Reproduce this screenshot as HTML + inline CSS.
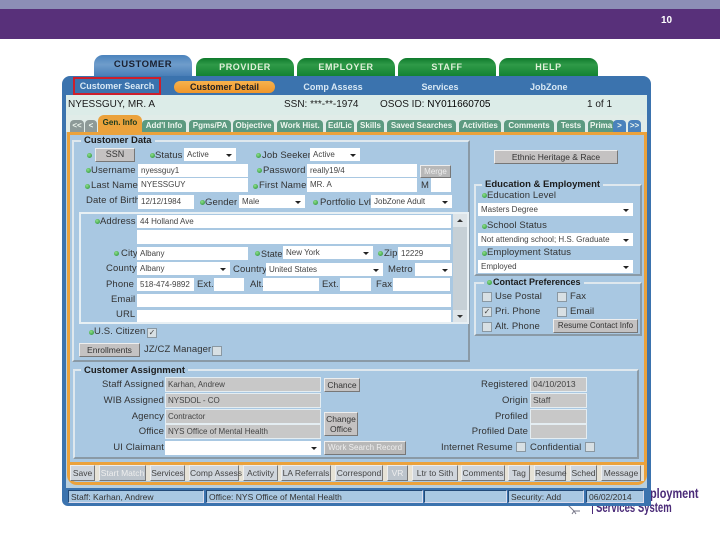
<!DOCTYPE html>
<html><head><meta charset="utf-8"><style>
html,body{margin:0;padding:0}
body{width:720px;height:540px;overflow:hidden;background:#fff;position:relative;font-family:"Liberation Sans",sans-serif;font-size:10px;color:#222;filter:blur(.35px)}
div,span{position:absolute;white-space:nowrap;box-sizing:border-box}
.tp{top:58px;height:19px;background:linear-gradient(#0f7a2c,#2f9a48 35%,#118030);border-radius:9px 9px 0 0;color:#dff0d8;font:bold 9px/19px "Liberation Sans",sans-serif;letter-spacing:.6px;text-align:center}
.n{top:81px;color:#d8e8f4;font:bold 9px/12px "Liberation Sans",sans-serif;text-align:center}
.i{top:99px;font-size:10px;line-height:12px;color:#1a1a1a}
.t{top:120px;height:12px;background:#5c9a80;color:#eef6ee;border-radius:4px 4px 0 0;font:bold 8px/12px "Liberation Sans",sans-serif;text-align:center;overflow:hidden}
.g{border:2px solid #dfe8ee;border-right-color:#8a9aa6;border-bottom-color:#8a9aa6}
.gt{background:#a9c8e2;padding:0 3px;color:#1c1c1c;font-size:9.5px;line-height:10px;font-weight:bold}
.l{font-size:9.5px;line-height:12px;color:#333;letter-spacing:.1px}
.r{text-align:right;width:110px}
.d{width:5px;height:5px;border-radius:50%;background:radial-gradient(circle at 40% 35%,#8fe08a,#1f8a32)}
.w{background:#fff;font-size:8px;line-height:13px;padding-left:3px;color:#444;overflow:hidden}
.s:after{content:"";position:absolute;right:4px;top:6px;border:3px solid transparent;border-top:3px solid #222;border-bottom:0}
.a{background:#c8c8c8;border:1px solid #e4edf2;font-size:8px;line-height:11px;padding-left:2px;color:#444}
.b{background:#c4c2c2;border:1px solid;border-color:#eee #777 #777 #eee;font-size:8px;line-height:11px;color:#333;text-align:center}
.f{color:#eee;background:#b8b8b8}
.c{width:10px;height:10px;background:#d8e0e4;border:1px solid #8a98a2;font-size:8px;line-height:8px;color:#444;text-align:center}
.o{top:465px;height:16px;background:#cfd5dc;border:1px solid;border-color:#eee #777 #777 #eee;font-size:8.5px;line-height:14px;color:#444;text-align:center}
.st{top:490px;height:13px;background:#a9c8e2;border:1px solid;border-color:#234a78 #dde #dde #234a78;font-size:8.5px;line-height:12px;padding-left:2px;color:#333}
</style></head><body>
<div style="left:0;top:0;width:720px;height:9px;background:#8c8eb6"></div>
<div style="left:0;top:9px;width:720px;height:30px;background:#58307a"></div>
<div style="left:661px;top:15px;color:#fff;font:bold 10px/12px 'Liberation Sans',sans-serif">10</div>

<div style="left:650px;top:486px;color:#4a2a78;font:bold 14px/14px 'Liberation Sans',sans-serif;transform:scaleX(.78);transform-origin:0 0">ployment</div>
<div style="left:596px;top:500px;color:#4a2a78;font:bold 14px/14px 'Liberation Sans',sans-serif;transform:scaleX(.68);transform-origin:0 0">Services System</div>
<div style="left:592px;top:504px;width:1px;height:10px;background:#4a2a78"></div>
<svg style="position:absolute;left:566px;top:504px" width="16" height="12"><path d="M2 1 L8 7 L14 7 M8 7 L10 10 M8 7 L6 10" stroke="#778" fill="none" stroke-width="1"/></svg>

<div style="left:94px;top:55px;width:98px;height:24px;background:linear-gradient(#4b83bd,#6f9dcb 40%,#3f76b2);border-radius:9px 9px 0 0;color:#1a2030;font:bold 9.5px/19px 'Liberation Sans',sans-serif;letter-spacing:.5px;text-align:center">CUSTOMER</div>
<div class="tp" style="left:196px;width:98px">PROVIDER</div>
<div class="tp" style="left:297px;width:98px">EMPLOYER</div>
<div class="tp" style="left:398px;width:98px">STAFF</div>
<div class="tp" style="left:499px;width:99px">HELP</div>

<div style="left:62px;top:76px;width:589px;height:430px;background:#3b73ae;border-radius:8px 8px 0 6px"></div>
<div style="left:66px;top:95px;width:581px;height:20px;background:#dcece8"></div>
<div style="left:66px;top:115px;width:581px;height:18px;background:#e0ece8"></div>
<div style="left:66px;top:132px;width:581px;height:356px;background:#b8cfde"></div>

<div style="left:73px;top:77px;width:88px;height:18px;border:2px solid #cc1f2c;background:#3b73ae"></div>
<div class="n" style="left:73px;width:88px;top:80px">Customer Search</div>
<div class="n" style="left:174px;width:101px;height:12px;background:linear-gradient(#f6b24e,#f0962a);border-radius:6px;color:#222">Customer Detail</div>
<div class="n" style="left:303px;width:60px">Comp Assess</div>
<div class="n" style="left:421px;width:38px">Services</div>
<div class="n" style="left:530px;width:37px">JobZone</div>

<div class="i" style="left:68px">NYESSGUY, MR. A</div>
<div class="i" style="left:284px">SSN: ***-**-1974</div>
<div class="i" style="left:380px">OSOS ID: <b style="font-weight:normal;color:#000">NY011660705</b></div>
<div class="i" style="left:587px">1 of 1</div>

<div class="t" style="left:70px;width:14px;background:#8d9a98">&lt;&lt;</div>
<div class="t" style="left:85px;width:12px;background:#8d9a98">&lt;</div>
<div class="t" style="left:142px;width:44px">Add'l Info</div>
<div class="t" style="left:189px;width:42px">Pgms/PA</div>
<div class="t" style="left:233px;width:41px">Objective</div>
<div class="t" style="left:277px;width:46px">Work Hist.</div>
<div class="t" style="left:326px;width:28px">Ed/Lic</div>
<div class="t" style="left:357px;width:27px">Skills</div>
<div class="t" style="left:387px;width:69px">Saved Searches</div>
<div class="t" style="left:459px;width:42px">Activities</div>
<div class="t" style="left:504px;width:50px">Comments</div>
<div class="t" style="left:557px;width:28px">Tests</div>
<div class="t" style="left:588px;width:26px;text-align:left;padding-left:2px">Prima</div>
<div class="t" style="left:613px;width:13px;background:#4a82bc">&gt;</div>
<div class="t" style="left:628px;width:13px;background:#4a82bc">&gt;&gt;</div>

<div style="left:67px;top:132px;width:580px;height:353px;border:3px solid #eba23c;background:#a9c8e2;border-radius:0 0 10px 10px"></div>
<div style="left:70px;top:462px;width:574px;height:3px;background:#eba23c"></div>
<div style="left:70px;top:465px;width:574px;height:16px;background:#e6e2d6"></div>
<div style="left:98px;top:115px;width:44px;height:19px;background:#eba23c;border-radius:6px 6px 0 0;color:#1a3a20;font:bold 8px/16px 'Liberation Sans',sans-serif;text-align:center">Gen. Info</div>

<div class="g" style="left:72px;top:140px;width:398px;height:222px"></div>
<div class="gt" style="left:81px;top:136px">Customer Data</div>

<div class="d" style="left:87px;top:153px"></div>
<div class="b" style="left:95px;top:148px;width:40px;height:14px;font-size:9px">SSN</div>
<div class="d" style="left:150px;top:153px"></div><div class="l" style="left:155px;top:150px">Status</div>
<div class="w s" style="left:184px;top:148px;width:52px;height:13px">Active</div>
<div class="d" style="left:256px;top:153px"></div><div class="l" style="left:262px;top:150px">Job Seeker</div>
<div class="w s" style="left:310px;top:148px;width:50px;height:13px">Active</div>

<div class="d" style="left:86px;top:168px"></div><div class="l" style="left:91px;top:165px">Username</div>
<div class="w" style="left:138px;top:164px;width:110px;height:13px">nyessguy1</div>
<div class="d" style="left:257px;top:168px"></div><div class="l" style="left:263px;top:165px">Password</div>
<div class="w" style="left:307px;top:164px;width:110px;height:13px">really19/4</div>
<div class="b f" style="left:420px;top:165px;width:31px;height:13px">Merge</div>

<div class="d" style="left:85px;top:184px"></div><div class="l" style="left:91px;top:180px">Last Name</div>
<div class="w" style="left:138px;top:178px;width:110px;height:14px">NYESSGUY</div>
<div class="d" style="left:253px;top:184px"></div><div class="l" style="left:259px;top:180px">First Name</div>
<div class="w" style="left:307px;top:178px;width:110px;height:14px">MR. A</div>
<div class="l" style="left:421px;top:180px">M</div>
<div class="w" style="left:431px;top:178px;width:20px;height:14px"></div>

<div class="l" style="left:86px;top:195px">Date of Birth</div>
<div class="w" style="left:138px;top:195px;width:56px;height:14px">12/12/1984</div>
<div class="d" style="left:200px;top:200px"></div><div class="l" style="left:205px;top:197px">Gender</div>
<div class="w s" style="left:239px;top:195px;width:66px;height:13px">Male</div>
<div class="d" style="left:313px;top:200px"></div><div class="l" style="left:320px;top:197px">Portfolio Lvl</div>
<div class="w s" style="left:371px;top:195px;width:81px;height:13px">JobZone Adult</div>

<div style="left:79px;top:212px;width:390px;height:112px;border:2px solid #e8f0f4"></div>
<div style="left:453px;top:214px;width:14px;height:108px;background:#c6d0d6"></div>
<div style="left:453px;top:214px;width:14px;height:13px;background:#dde4e8"></div>
<div style="left:453px;top:310px;width:14px;height:12px;background:#dde4e8"></div>
<div style="left:457px;top:219px;border:3px solid transparent;border-bottom:3px solid #333;border-top:0"></div>
<div style="left:457px;top:315px;border:3px solid transparent;border-top:3px solid #333;border-bottom:0"></div>

<div class="d" style="left:95px;top:219px"></div><div class="l" style="left:100px;top:216px">Address</div>
<div class="w" style="left:137px;top:215px;width:314px;height:13px">44 Holland Ave</div>
<div class="w" style="left:137px;top:230px;width:314px;height:14px"></div>
<div class="d" style="left:114px;top:251px"></div><div class="l" style="left:121px;top:248px">City</div>
<div class="w" style="left:137px;top:247px;width:111px;height:13px">Albany</div>
<div class="d" style="left:255px;top:251px"></div><div class="l" style="left:261px;top:248px;font-size:9px">State</div>
<div class="w s" style="left:283px;top:246px;width:90px;height:13px">New York</div>
<div class="d" style="left:378px;top:251px"></div><div class="l" style="left:384px;top:248px">Zip</div>
<div class="w" style="left:398px;top:247px;width:52px;height:13px">12229</div>

<div class="l" style="left:106px;top:263px">County</div>
<div class="w s" style="left:137px;top:262px;width:93px;height:13px">Albany</div>
<div class="l" style="left:233px;top:264px">Country</div>
<div class="w s" style="left:266px;top:263px;width:117px;height:13px">United States</div>
<div class="l" style="left:388px;top:264px">Metro</div>
<div class="w s" style="left:415px;top:263px;width:37px;height:13px"></div>

<div class="l" style="left:106px;top:279px">Phone</div>
<div class="w" style="left:137px;top:278px;width:57px;height:13px">518-474-9892</div>
<div class="l" style="left:197px;top:279px">Ext.</div>
<div class="w" style="left:214px;top:278px;width:30px;height:13px"></div>
<div class="l" style="left:250px;top:279px">Alt.</div>
<div class="w" style="left:263px;top:278px;width:56px;height:13px"></div>
<div class="l" style="left:322px;top:279px">Ext.</div>
<div class="w" style="left:340px;top:278px;width:31px;height:13px"></div>
<div class="l" style="left:376px;top:279px">Fax</div>
<div class="w" style="left:393px;top:278px;width:57px;height:13px"></div>

<div class="l" style="left:111px;top:294px">Email</div>
<div class="w" style="left:137px;top:294px;width:314px;height:13px"></div>
<div class="l" style="left:116px;top:309px">URL</div>
<div class="w" style="left:137px;top:310px;width:314px;height:12px"></div>

<div class="d" style="left:89px;top:330px"></div><div class="l" style="left:94px;top:326px">U.S. Citizen</div>
<div class="c" style="left:147px;top:328px">&#10003;</div>
<div class="b" style="left:79px;top:343px;width:61px;height:14px;line-height:12px;font-size:8.5px">Enrollments</div>
<div class="l" style="left:144px;top:344px">JZ/CZ Manager</div>
<div class="c" style="left:212px;top:346px"></div>

<div class="b" style="left:494px;top:150px;width:124px;height:14px;line-height:12px;font-size:8.5px">Ethnic Heritage &amp; Race</div>

<div class="g" style="left:474px;top:184px;width:168px;height:92px"></div>
<div class="gt" style="left:482px;top:180px">Education &amp; Employment</div>
<div class="d" style="left:482px;top:193px"></div><div class="l" style="left:487px;top:190px">Education Level</div>
<div class="w s" style="left:478px;top:203px;width:155px;height:13px">Masters Degree</div>
<div class="d" style="left:482px;top:224px"></div><div class="l" style="left:487px;top:220px">School Status</div>
<div class="w s" style="left:478px;top:233px;width:155px;height:13px">Not attending school; H.S. Graduate</div>
<div class="d" style="left:482px;top:251px"></div><div class="l" style="left:487px;top:247px">Employment Status</div>
<div class="w s" style="left:478px;top:260px;width:155px;height:13px">Employed</div>

<div class="g" style="left:474px;top:282px;width:168px;height:54px"></div>
<div class="gt" style="left:484px;top:277px;padding-left:9px;font-size:9px">Contact Preferences</div>
<div class="d" style="left:487px;top:280px"></div>
<div class="c" style="left:482px;top:292px"></div><div class="l" style="left:495px;top:291px">Use Postal</div>
<div class="c" style="left:557px;top:292px"></div><div class="l" style="left:570px;top:291px">Fax</div>
<div class="c" style="left:482px;top:307px">&#10003;</div><div class="l" style="left:495px;top:306px">Pri. Phone</div>
<div class="c" style="left:557px;top:307px"></div><div class="l" style="left:570px;top:306px">Email</div>
<div class="c" style="left:482px;top:322px"></div><div class="l" style="left:495px;top:321px">Alt. Phone</div>
<div class="b" style="left:553px;top:319px;width:85px;height:14px;line-height:12px;font-size:8px">Resume Contact Info</div>

<div class="g" style="left:73px;top:369px;width:566px;height:90px"></div>
<div class="gt" style="left:81px;top:366px">Customer Assignment</div>
<div class="l r" style="left:54px;top:379px">Staff Assigned</div>
<div class="l r" style="left:54px;top:395px">WIB Assigned</div>
<div class="l r" style="left:54px;top:411px">Agency</div>
<div class="l r" style="left:54px;top:426px">Office</div>
<div class="l r" style="left:54px;top:442px">UI Claimant</div>
<div class="a" style="left:165px;top:377px;width:156px;height:15px;line-height:13px">Karhan, Andrew</div>
<div class="a" style="left:165px;top:393px;width:156px;height:15px;line-height:13px">NYSDOL - CO</div>
<div class="a" style="left:165px;top:409px;width:156px;height:15px;line-height:13px">Contractor</div>
<div class="a" style="left:165px;top:424px;width:156px;height:15px;line-height:13px">NYS Office of Mental Health</div>
<div class="w s" style="left:165px;top:441px;width:156px;height:14px"></div>
<div class="b" style="left:324px;top:378px;width:36px;height:14px;line-height:12px;font-size:8.5px">Chance</div>
<div class="b" style="left:324px;top:412px;width:34px;height:24px;white-space:normal;line-height:10px;padding-top:1px;font-size:8.5px">Change Office</div>
<div class="b f" style="left:324px;top:441px;width:82px;height:14px;line-height:12px">Work Search Record</div>

<div class="l r" style="left:418px;top:379px">Registered</div>
<div class="l r" style="left:418px;top:395px">Origin</div>
<div class="l r" style="left:418px;top:411px">Profiled</div>
<div class="l r" style="left:418px;top:426px">Profiled Date</div>
<div class="a" style="left:530px;top:377px;width:57px;height:15px;line-height:13px;font-size:8.5px">04/10/2013</div>
<div class="a" style="left:530px;top:393px;width:57px;height:15px;line-height:13px;font-size:8.5px">Staff</div>
<div class="a" style="left:530px;top:409px;width:57px;height:15px"></div>
<div class="a" style="left:530px;top:424px;width:57px;height:15px"></div>
<div class="l" style="left:441px;top:442px">Internet Resume</div>
<div class="c" style="left:516px;top:442px"></div>
<div class="l" style="left:530px;top:442px">Confidential</div>
<div class="c" style="left:585px;top:442px"></div>

<div class="o" style="left:70px;width:25px">Save</div>
<div class="o" style="left:99px;width:47px;color:#eee;background:#bcc4cc">Start Match</div>
<div class="o" style="left:150px;width:35px">Services</div>
<div class="o" style="left:189px;width:50px">Comp Assess</div>
<div class="o" style="left:243px;width:35px">Activity</div>
<div class="o" style="left:281px;width:50px">LA Referrals</div>
<div class="o" style="left:335px;width:48px">Correspond</div>
<div class="o" style="left:387px;width:21px;color:#eee;background:#bcc4cc">VR</div>
<div class="o" style="left:412px;width:46px">Ltr to Sith</div>
<div class="o" style="left:461px;width:44px">Comments</div>
<div class="o" style="left:508px;width:22px">Tag</div>
<div class="o" style="left:534px;width:32px">Resume</div>
<div class="o" style="left:570px;width:27px">Sched</div>
<div class="o" style="left:601px;width:40px">Message</div>

<div class="st" style="left:68px;width:136px">Staff: Karhan, Andrew</div>
<div class="st" style="left:206px;width:217px">Office: NYS Office of Mental Health</div>
<div class="st" style="left:424px;width:83px"></div>
<div class="st" style="left:508px;width:76px">Security: Add</div>
<div class="st" style="left:586px;width:58px">06/02/2014</div>
</body></html>
